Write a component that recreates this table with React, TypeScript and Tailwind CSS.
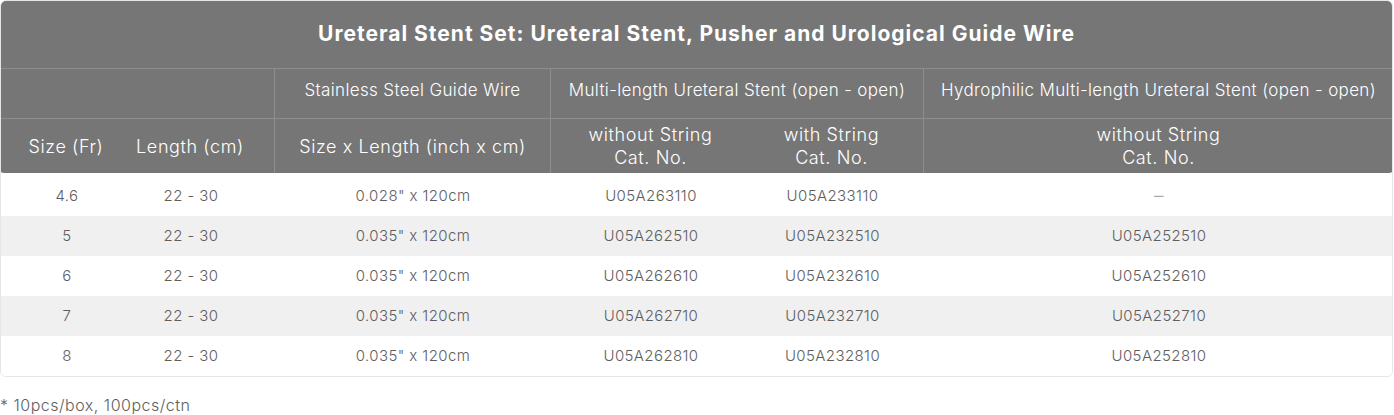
import React from "react";

const rows = [
  { size: "4.6", len: "22 - 30", wire: '0.028" x 120cm', a: "U05A263110", b: "U05A233110", c: "–" },
  { size: "5", len: "22 - 30", wire: '0.035" x 120cm', a: "U05A262510", b: "U05A232510", c: "U05A252510" },
  { size: "6", len: "22 - 30", wire: '0.035" x 120cm', a: "U05A262610", b: "U05A232610", c: "U05A252610" },
  { size: "7", len: "22 - 30", wire: '0.035" x 120cm', a: "U05A262710", b: "U05A232710", c: "U05A252710" },
  { size: "8", len: "22 - 30", wire: '0.035" x 120cm', a: "U05A262810", b: "U05A232810", c: "U05A252810" },
];

const cols = "grid grid-cols-[132px_142px_276px_200px_173px_470px]";

export default function App() {
  return (
    <div className="w-[1394px] bg-white font-['Inter',sans-serif]">
      <div className="w-[1393px] rounded-[6px] border border-[#e6e6e6] overflow-hidden">
        <div className="bg-[#767676] text-white rounded-b-[4px] -mx-px -mt-px">
          <div className="h-[69px] border-b border-[#8e8e8e] flex items-center justify-center text-[21px] font-bold tracking-[1px]">
            Ureteral Stent Set: Ureteral Stent, Pusher and Urological Guide Wire
          </div>
          <div className="h-[50px] pb-[5px] border-b border-[#8e8e8e] grid grid-cols-[274px_276px_373px_1fr] text-[17px] font-light tracking-[0.35px]">
            <div />
            <div className="border-l border-[#8e8e8e] -mb-[5px] pb-[5px] flex items-center justify-center">Stainless Steel Guide Wire</div>
            <div className="border-l border-[#8e8e8e] -mb-[5px] pb-[5px] flex items-center justify-center">Multi-length Ureteral Stent (open - open)</div>
            <div className="border-l border-[#8e8e8e] -mb-[5px] pb-[5px] flex items-center justify-center">Hydrophilic Multi-length Ureteral Stent (open - open)</div>
          </div>
          <div className={`h-[54px] ${cols} text-[18px] font-light leading-[23px] tracking-[0.6px]`}>
            <div className="flex items-center justify-center">Size (Fr)</div>
            <div className="flex items-center justify-center pr-[26px]">Length (cm)</div>
            <div className="border-l border-[#8e8e8e] flex items-center justify-center">Size x Length (inch x cm)</div>
            <div className="border-l border-[#8e8e8e] flex flex-col items-center justify-center text-center">
              <span>without String</span>
              <span>Cat. No.</span>
            </div>
            <div className="flex flex-col items-center justify-center text-center pr-[10px]">
              <span>with String</span>
              <span>Cat. No.</span>
            </div>
            <div className="border-l border-[#8e8e8e] flex flex-col items-center justify-center text-center">
              <span>without String</span>
              <span>Cat. No.</span>
            </div>
          </div>
        </div>
        <div className="text-[15px] text-[#5e5e5e] font-light tracking-[0.4px]">
          {rows.map((r, i) => (
            <div
              key={i}
              className={`${cols} ${i === 0 ? "h-[43px] pt-[3px]" : "h-[40px]"} ${i % 2 === 1 ? "bg-[#f0f0f0]" : "bg-white"} items-center text-center`}
            >
              <div>{r.size}</div>
              <div className="pr-[26px]">{r.len}</div>
              <div>{r.wire}</div>
              <div>{r.a}</div>
              <div className="pr-[10px]">{r.b}</div>
              <div className={r.c === "–" ? "text-[19px] text-[#aaaaaa]" : ""}>{r.c}</div>
            </div>
          ))}
        </div>
      </div>
      <div className="mt-[17px] text-[16px] leading-[22px] text-[#5e5e5e] font-light tracking-[0.5px]">* 10pcs/box, 100pcs/ctn</div>
    </div>
  );
}
